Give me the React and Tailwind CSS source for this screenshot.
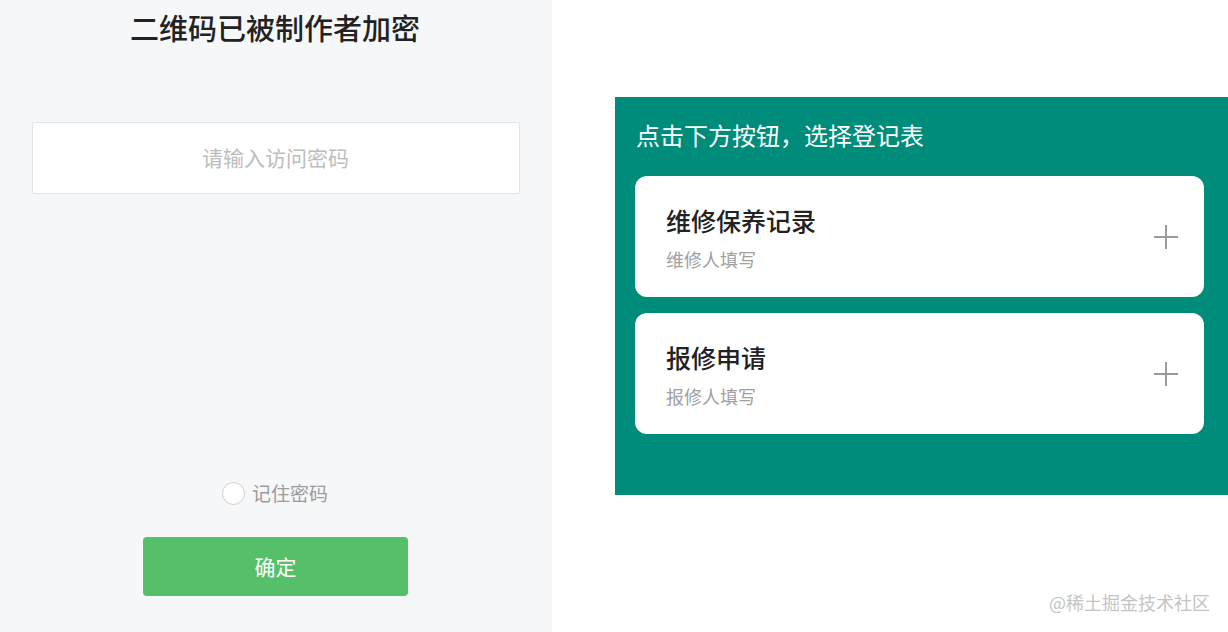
const FONT = { fontFamily: '"Noto Sans CJK SC", "Noto Sans", sans-serif' };

const forms = [
  { title: "维修保养记录", sub: "维修人填写" },
  { title: "报修申请", sub: "报修人填写" },
];

function PlusIcon() {
  return (
    <svg width="24" height="24" viewBox="0 0 24 24" className="shrink-0">
      <path d="M12 0v24M0 12h24" stroke="#9a9a9a" strokeWidth="2" fill="none" />
    </svg>
  );
}

export default function App() {
  return (
    <div className="flex w-[1228px] h-[632px] overflow-hidden bg-white" style={FONT}>
      {/* left: password page */}
      <div className="w-[552px] h-full bg-[#f6f7f9] flex flex-col items-center">
        <h1 className="mt-[8px] text-[29px] leading-[38px] font-medium text-[#222] ml-[-2px]">
          二维码已被制作者加密
        </h1>
        <div className="mt-[76px] w-[488px] h-[72px] ml-[-1px] bg-white border border-[#e3e4e6] rounded-[2px] flex items-center justify-center">
          <span className="text-[21px] text-[#bdbdbd]">请输入访问密码</span>
        </div>
        <div className="mt-[287px] flex items-center gap-[7px] mr-[2px]">
          <span className="w-[23px] h-[23px] rounded-full border border-[#cfcfcf] bg-white" />
          <span className="text-[19px] leading-[24px] text-[#9b9b9b]">记住密码</span>
        </div>
        <button className="mt-[32px] w-[265px] h-[59px] rounded-[4px] bg-[#56bf6a] text-white text-[21px] ml-[-1px]">
          确定
        </button>
      </div>

      {/* right: form selector */}
      <div className="flex-1 flex flex-col pt-[97px] pl-[63px]">
        <div className="bg-[#008c7a] h-[398px] pl-[20px] pr-[24px] pt-[20px]">
          <p className="text-[24px] leading-[36px] text-white pl-[1px]">点击下方按钮，选择登记表</p>
          <div className="mt-[23px] flex flex-col gap-[16px]">
            {forms.map((f) => (
              <div
                key={f.title}
                className="h-[121px] bg-white rounded-[12px] flex items-center justify-between pl-[31px] pr-[26px]"
              >
                <div className="flex flex-col mt-[2px]">
                  <span className="text-[25px] leading-[32px] font-medium text-[#222]">{f.title}</span>
                  <span className="mt-[11px] text-[18px] leading-[24px] text-[#a0a0a0]">{f.sub}</span>
                </div>
                <PlusIcon />
              </div>
            ))}
          </div>
        </div>
        <div className="mt-[96px] pr-[18px] text-right text-[18px] leading-[22px] text-[#c4c4c4]">
          @稀土掘金技术社区
        </div>
      </div>
    </div>
  );
}
